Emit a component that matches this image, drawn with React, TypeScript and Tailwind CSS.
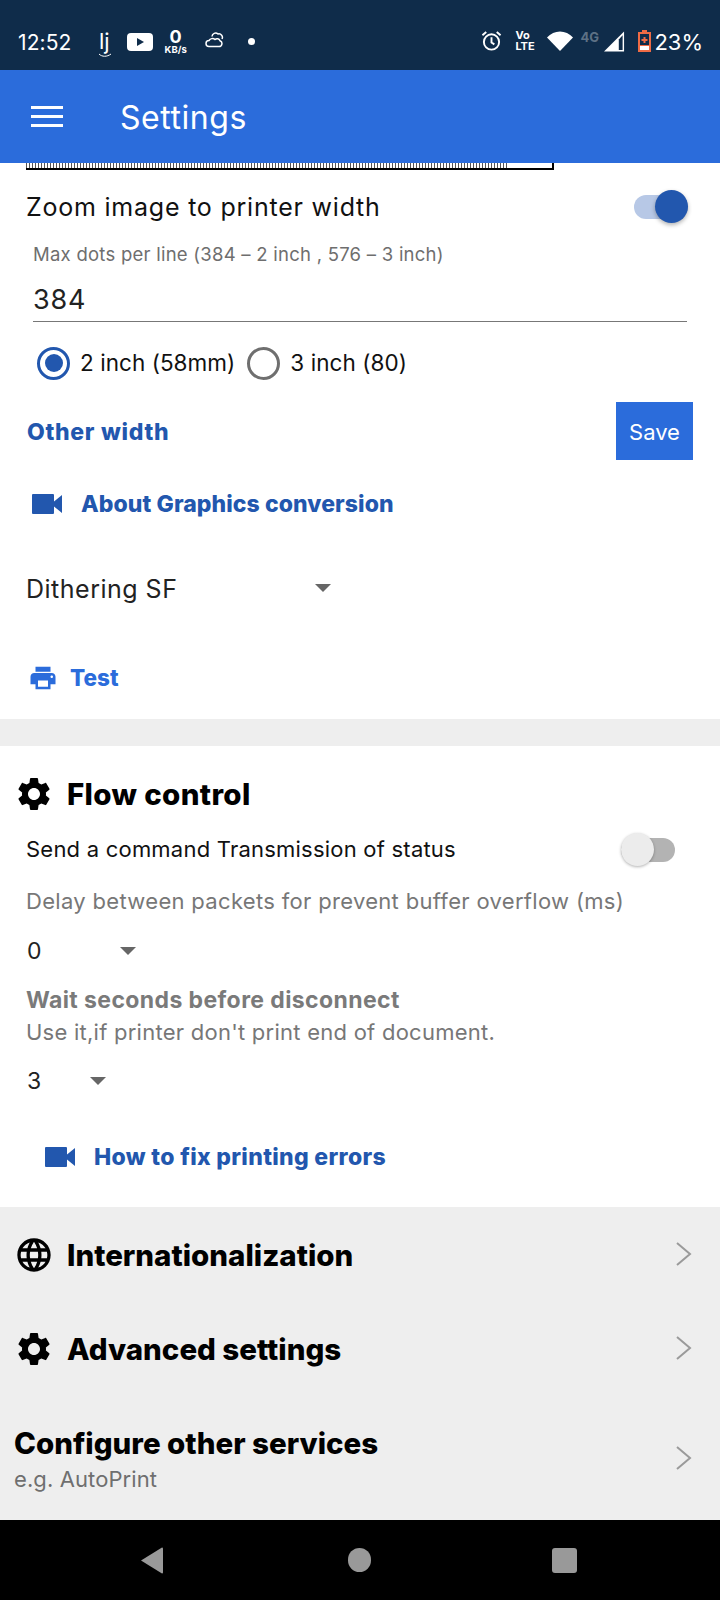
import type { ReactNode } from "react";

const GEAR = "M19.14 12.94c.04-.3.06-.61.06-.94 0-.32-.02-.64-.07-.94l2.03-1.58c.18-.14.23-.41.12-.61l-1.92-3.32c-.12-.22-.37-.29-.59-.22l-2.39.96c-.5-.38-1.03-.7-1.62-.94l-.36-2.54c-.04-.24-.24-.41-.48-.41h-3.84c-.24 0-.43.17-.47.41l-.36 2.54c-.59.24-1.13.57-1.62.94l-2.39-.96c-.22-.08-.47 0-.59.22L2.74 8.87c-.12.21-.08.47.12.61l2.03 1.58c-.05.3-.09.63-.09.94s.02.64.07.94l-2.03 1.58c-.18.14-.23.41-.12.61l1.92 3.32c.12.22.37.29.59.22l2.39-.96c.5.38 1.03.7 1.62.94l.36 2.54c.05.24.24.41.48.41h3.84c.24 0 .44-.17.47-.41l.36-2.54c.59-.24 1.13-.56 1.62-.94l2.39.96c.22.08.47 0 .59-.22l1.92-3.32c.12-.22.07-.47-.12-.61l-2.01-1.58zM12 15.6c-1.98 0-3.6-1.62-3.6-3.6s1.62-3.6 3.6-3.6 3.6 1.62 3.6 3.6-1.62 3.6-3.6 3.6z";
const GLOBE = "M11.99 2C6.47 2 2 6.48 2 12s4.47 10 9.99 10C17.52 22 22 17.52 22 12S17.52 2 11.99 2zm6.93 6h-2.95c-.32-1.25-.78-2.45-1.38-3.56 1.84.63 3.37 1.91 4.33 3.56zM12 4.04c.83 1.2 1.48 2.53 1.91 3.96h-3.82c.43-1.43 1.08-2.76 1.91-3.96zM4.26 14C4.1 13.36 4 12.69 4 12s.1-1.36.26-2h3.38c-.08.66-.14 1.32-.14 2 0 .68.06 1.34.14 2H4.26zm.82 2h2.95c.32 1.25.78 2.45 1.38 3.56-1.84-.63-3.37-1.9-4.33-3.56zm2.95-8H5.08c.96-1.66 2.49-2.93 4.33-3.56C8.81 5.55 8.35 6.75 8.03 8zM12 19.96c-.83-1.2-1.48-2.53-1.91-3.96h3.82c-.43 1.43-1.08 2.76-1.91 3.96zM14.34 14H9.66c-.09-.66-.16-1.32-.16-2 0-.68.07-1.35.16-2h4.68c.09.65.16 1.32.16 2 0 .68-.07 1.34-.16 2zm.25 5.56c.6-1.11 1.06-2.31 1.38-3.56h2.95c-.96 1.65-2.49 2.93-4.33 3.56zM16.36 14c.08-.66.14-1.32.14-2 0-.68-.06-1.34-.14-2h3.38c.16.64.26 1.31.26 2s-.1 1.36-.26 2h-3.38z";
const PRINT = "M19 8H5c-1.66 0-3 1.34-3 3v6h4v4h12v-4h4v-6c0-1.66-1.34-3-3-3zm-3 11H8v-5h8v5zm3-7c-.55 0-1-.45-1-1s.45-1 1-1 1 .45 1 1-.45 1-1 1zm-1-9H6v4h12V3z";

function Icon({ d, className }: { d: string; className: string }) {
  return (
    <svg viewBox="0 0 24 24" fill="currentColor" className={className}>
      <path d={d} />
    </svg>
  );
}

function VideoIcon() {
  return (
    <svg viewBox="0 0 30 20" fill="#2257ae" className="w-[30px] h-[20px]">
      <path d="M1 0h20a1 1 0 0 1 1 1v6.5L30 1v18l-8-6.5V19a1 1 0 0 1-1 1H1a1 1 0 0 1-1-1V1a1 1 0 0 1 1-1z" />
    </svg>
  );
}

function Caret() {
  return <span className="w-0 h-0 border-x-[8px] border-x-transparent border-t-[8px] border-t-[#666]" />;
}

function Chevron({ className }: { className?: string }) {
  return (
    <svg viewBox="0 0 18 26" fill="none" stroke="#9a9a9a" strokeWidth="2" className={className ?? "w-[18px] h-[26px]"}>
      <path d="M2 2l13 11L2 24" />
    </svg>
  );
}

function StatusBar() {
  return (
    <div className="h-[70px] bg-[#0f2c4a] flex items-center text-white pt-[15px]">
      <span className="ml-[18px] w-[52px] text-[21px] tracking-[0.1px]">12:52</span>
      <span className="ml-[29px] mb-[4px] text-[22px] leading-none relative">
        lj
        <svg viewBox="0 0 14 5" className="absolute left-[-1px] top-[23px] w-[14px] h-[5px]" fill="none" stroke="white" strokeWidth="1">
          <path d="M1 1c3 3 8 3 12 0" />
        </svg>
      </span>
      <svg viewBox="0 0 26 18" className="ml-[17px] mb-[2px] w-[26px] h-[18px]">
        <rect width="26" height="18" rx="4" fill="white" />
        <path d="M10 5l7 4-7 4z" fill="#0f2c4a" />
      </svg>
      <span className="ml-[10px] mb-[3px] w-[26px] flex flex-col items-center leading-none">
        <span className="text-[18px] font-bold leading-[17px]">0</span>
        <span className="text-[9.5px] font-bold leading-[10px]">KB/s</span>
      </span>
      <svg viewBox="0 0 20 16" fill="none" stroke="white" strokeWidth="1.5" className="ml-[15px] mb-[6px] w-[20px] h-[16px]">
        <path d="M5 14.5h10a3 3 0 0 0 1-5.8 3.2 3.2 0 0 0-5-1.2 4 4 0 0 0-6 1 3 3 0 0 0 0 6zM8 4.5a3.6 3.6 0 0 1 6-2.5 3.5 3.5 0 0 1 4 5" />
      </svg>
      <span className="ml-[24px] mb-[3px] w-[7px] h-[7px] rounded-full bg-white" />
      <span className="flex-1" />
      <svg viewBox="0 0 22 22" fill="none" stroke="white" strokeWidth="2" className="mb-[3px] w-[21px] h-[22px]">
        <circle cx="11" cy="12" r="8" />
        <path d="M11 7v5.5l3 2M1.5 5l4-3.5M20.5 5l-4-3.5" />
      </svg>
      <span className="ml-[13px] mb-[3px] w-[23px] flex flex-col text-[11px] font-bold leading-[11px]">
        <span>Vo</span>
        <span>LTE</span>
      </span>
      <svg viewBox="0 0 26 20" className="ml-[9px] mb-[3px] w-[26px] h-[20px]">
        <path d="M0 6.5C7-1.5 19-1.5 26 6.5L13 20z" fill="white" />
      </svg>
      <span className="ml-[7px] mb-[11px] w-[19px] text-[13px] leading-none font-bold text-[#5d7185]">4G</span>
      <svg viewBox="0 0 22 21" className="ml-[5px] mb-[3px] w-[21px] h-[21px]">
        <path d="M21 0v21H0z" fill="white" />
        <path d="M19.5 4v15.5h-4V8.5z" fill="#0f2c4a" />
      </svg>
      <svg viewBox="0 0 13 22" className="ml-[13px] mb-[3px] w-[13px] h-[22px]">
        <path d="M4 0h5v2h4v20H0V2h4z" fill="#ee6b45" />
        <rect x="2" y="4" width="9" height="11" fill="#0f2c4a" />
        <rect x="2" y="16" width="9" height="4" fill="white" />
        <path d="M5.5 7h2v2h2v2h-2v2h-2v-2h-2V9h2z" fill="#ee6b45" />
      </svg>
      <span className="ml-[3px] mr-[17px] text-[22px]">23%</span>
    </div>
  );
}

function Toggle({ on }: { on: boolean }) {
  if (on) {
    return (
      <span className="relative block w-[54px] h-[24px] rounded-full bg-[#b7c8e6]">
        <span className="absolute right-0 top-[-5px] w-[33px] h-[33px] rounded-full bg-[#2257ae] shadow-[0_2px_4px_rgba(0,0,0,0.3)]" />
      </span>
    );
  }
  return (
    <span className="relative block w-[54px] h-[24px] rounded-full bg-[#b3b3b3]">
      <span className="absolute left-0 top-[-5px] w-[33px] h-[33px] rounded-full bg-[#ececec] shadow-[0_1px_3px_rgba(0,0,0,0.3)]" />
    </span>
  );
}

function Radio({ on, label }: { on: boolean; label: string }) {
  return (
    <span className="flex items-center">
      <span
        className={
          on
            ? "w-[33px] h-[33px] rounded-full border-[3px] border-[#2257ae] flex items-center justify-center"
            : "w-[33px] h-[33px] rounded-full border-[3px] border-[#6f6f6f]"
        }
      >
        {on && <span className="w-[18px] h-[18px] rounded-full bg-[#2257ae]" />}
      </span>
      <span className="ml-[10px] text-[22.5px] text-[#111] tracking-[0.05px]">{label}</span>
    </span>
  );
}

function GreyRow({ icon, title }: { icon: string; title: string }) {
  return (
    <div className="flex items-center justify-between pl-[14px] pr-[27px] pt-[2px] h-[94px]">
      <div className="flex items-center">
        <Icon d={icon} className="w-[40px] h-[40px] text-black" />
        <span className="ml-[13px] text-[29.5px] font-extrabold text-black">{title}</span>
      </div>
      <Chevron className="w-[18px] h-[26px] -mt-[2px]" />
    </div>
  );
}

function Label({ children, className }: { children: ReactNode; className: string }) {
  return <span className={className + " pt-[2px] text-[23px] font-extrabold text-[#2257ae]"}>{children}</span>;
}

export default function App() {
  return (
    <div className="w-[720px] h-[1600px] flex flex-col bg-[#eeeeee] font-['Inter',sans-serif] overflow-hidden">
      <StatusBar />
      <div className="h-[93px] bg-[#2b6cdb] flex items-center pl-[31px] text-white">
        <div className="flex flex-col gap-[6px]">
          <span className="block w-[32px] h-[3px] bg-white" />
          <span className="block w-[32px] h-[3px] bg-white" />
          <span className="block w-[32px] h-[3px] bg-white" />
        </div>
        <span className="ml-[57px] pt-[2px] text-[32px] tracking-[0.55px]">Settings</span>
      </div>

      <div className="bg-white h-[556px]">
        {/* bottom edge of the scrolled-away receipt preview */}
        <div className="h-[7px] ml-[26px] w-[528px] border-b-2 border-black flex justify-between">
          <div className="w-[482px] h-full bg-[repeating-linear-gradient(90deg,#555_0,#555_1px,#fff_1px,#fff_3px)]" />
          <div className="w-[2px] h-full bg-black" />
        </div>
        <div className="h-[74px] flex items-center justify-between pl-[26px] pr-[32px]">
          <span className="pt-[1px] text-[25px] text-[#111] tracking-[0.78px]">Zoom image to printer width</span>
          <Toggle on />
        </div>
        <div className="h-[20px] flex items-center pl-[33px] pt-[2px] text-[18.5px] text-[#6e6e6e] tracking-[0.25px]">
          Max dots per line (384 – 2 inch , 576 – 3 inch)
        </div>
        <div className="h-[58px] ml-[33px] w-[654px] flex items-center pt-[15px] border-b border-[#777] text-[27px] text-[#222] tracking-[0.8px]">
          384
        </div>
        <div className="h-[80px] flex items-center pl-[37px] gap-[12px] pt-[2px]">
          <Radio on label="2 inch (58mm)" />
          <Radio on={false} label="3 inch (80)" />
        </div>
        <div className="h-[58px] flex items-center justify-between pl-[27px] pr-[27px]">
          <Label className="tracking-[0.7px]">Other width</Label>
          <button className="w-[77px] h-[58px] pt-[2px] bg-[#2b6cdb] text-white text-[22px]">Save</button>
        </div>
        <div className="h-[88px] flex items-center pl-[32px]">
          <VideoIcon />
          <span className="ml-[19px]">
            <Label className="tracking-[0.08px]">About Graphics conversion</Label>
          </span>
        </div>
        <div className="h-[80px] flex items-center pl-[26px]">
          <span className="w-[289px] pt-[3px] text-[25px] text-[#222] tracking-[0.5px]">Dithering SF</span>
          <Caret />
        </div>
        <div className="h-[91px] flex items-center pl-[28px] pt-[8px]">
          <Icon d={PRINT} className="w-[30px] h-[30px] text-[#2b6cdb]" />
          <span className="ml-[12px] text-[22.5px] font-extrabold text-[#2b6cdb]">Test</span>
        </div>
      </div>

      <div className="bg-white h-[461px] mt-[27px]">
        <div className="h-[69px] pt-[27px] flex items-center pl-[14px]">
          <Icon d={GEAR} className="w-[40px] h-[40px] text-black" />
          <span className="ml-[13px] text-[29.5px] font-extrabold text-black tracking-[0.35px]">Flow control</span>
        </div>
        <div className="h-[69px] flex items-center justify-between pl-[26px] pr-[45px]">
          <span className="text-[22px] text-[#111] tracking-[0.22px]">Send a command Transmission of status</span>
          <Toggle on={false} />
        </div>
        <div className="h-[34px] flex items-center pl-[26px] text-[22px] text-[#777] tracking-[0.32px]">
          Delay between packets for prevent buffer overflow (ms)
        </div>
        <div className="h-[64px] flex items-center pl-[27px] pt-[2px]">
          <span className="w-[93px] pt-[1px] text-[23px] text-[#222]">0</span>
          <Caret />
        </div>
        <div className="h-[36px] flex items-center pl-[26px] text-[23px] font-bold text-[#7a7a7a] tracking-[0.4px]">
          Wait seconds before disconnect
        </div>
        <div className="h-[28px] flex items-center pl-[26px] text-[22px] text-[#777] tracking-[0.25px]">
          Use it,if printer don't print end of document.
        </div>
        <div className="h-[70px] flex items-center pl-[27px]">
          <span className="w-[63px] text-[23px] text-[#222]">3</span>
          <Caret />
        </div>
        <div className="h-[82px] flex items-center pl-[45px]">
          <VideoIcon />
          <span className="ml-[19px]">
            <Label className="tracking-[0.32px]">How to fix printing errors</Label>
          </span>
        </div>
      </div>

      <div className="h-[313px]">
        <GreyRow icon={GLOBE} title="Internationalization" />
        <GreyRow icon={GEAR} title="Advanced settings" />
        <div className="flex items-center justify-between pl-[14px] pr-[27px] pt-[2px] h-[125px]">
          <div className="flex flex-col">
            <span className="text-[29.5px] font-extrabold text-black leading-[38px]">Configure other services</span>
            <span className="text-[22px] text-[#6f6f6f] leading-[30px] mt-[2px] tracking-[0.1px]">e.g. AutoPrint</span>
          </div>
          <Chevron className="w-[18px] h-[26px] -mt-[2px]" />
        </div>
      </div>

      <div className="h-[80px] bg-black flex items-center pl-[140px]">
        <svg viewBox="0 0 23 27" fill="#999" className="w-[23px] h-[27px]">
          <path d="M1 13.5L22 0.5q1 0 1 1v24q0 1-1 1z" />
        </svg>
        <span className="ml-[185px] w-[23px] h-[24px] rounded-full bg-[#999]" />
        <span className="ml-[181px] w-[25px] h-[25px] rounded-[3px] bg-[#999]" />
      </div>
    </div>
  );
}
